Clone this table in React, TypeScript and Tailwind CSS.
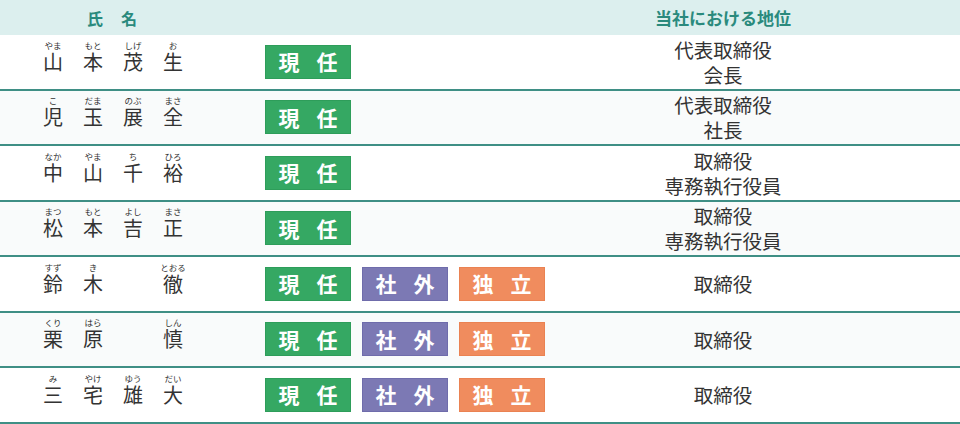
type Slot = { ruby: string; kanji: string } | null;

type Officer = {
  name: Slot[];
  badges: ("current" | "outside" | "independent")[];
  position: string[];
};

const officers: Officer[] = [
  {
    name: [
      { ruby: "やま", kanji: "山" },
      { ruby: "もと", kanji: "本" },
      { ruby: "しげ", kanji: "茂" },
      { ruby: "お", kanji: "生" },
    ],
    badges: ["current"],
    position: ["代表取締役", "会長"],
  },
  {
    name: [
      { ruby: "こ", kanji: "児" },
      { ruby: "だま", kanji: "玉" },
      { ruby: "のぶ", kanji: "展" },
      { ruby: "まさ", kanji: "全" },
    ],
    badges: ["current"],
    position: ["代表取締役", "社長"],
  },
  {
    name: [
      { ruby: "なか", kanji: "中" },
      { ruby: "やま", kanji: "山" },
      { ruby: "ち", kanji: "千" },
      { ruby: "ひろ", kanji: "裕" },
    ],
    badges: ["current"],
    position: ["取締役", "専務執行役員"],
  },
  {
    name: [
      { ruby: "まつ", kanji: "松" },
      { ruby: "もと", kanji: "本" },
      { ruby: "よし", kanji: "吉" },
      { ruby: "まさ", kanji: "正" },
    ],
    badges: ["current"],
    position: ["取締役", "専務執行役員"],
  },
  {
    name: [
      { ruby: "すず", kanji: "鈴" },
      { ruby: "き", kanji: "木" },
      null,
      { ruby: "とおる", kanji: "徹" },
    ],
    badges: ["current", "outside", "independent"],
    position: ["取締役"],
  },
  {
    name: [
      { ruby: "くり", kanji: "栗" },
      { ruby: "はら", kanji: "原" },
      null,
      { ruby: "しん", kanji: "慎" },
    ],
    badges: ["current", "outside", "independent"],
    position: ["取締役"],
  },
  {
    name: [
      { ruby: "み", kanji: "三" },
      { ruby: "やけ", kanji: "宅" },
      { ruby: "ゆう", kanji: "雄" },
      { ruby: "だい", kanji: "大" },
    ],
    badges: ["current", "outside", "independent"],
    position: ["取締役"],
  },
];

const badgeStyles = {
  current: { label: ["現", "任"], cls: "border-[#2e9d5a] bg-[#35a863]" },
  outside: { label: ["社", "外"], cls: "border-[#6f6cab] bg-[#7c79b4]" },
  independent: { label: ["独", "立"], cls: "border-[#ea8252] bg-[#f08c5e]" },
};

function Badge({ kind }: { kind: "current" | "outside" | "independent" }) {
  const b = badgeStyles[kind];
  return (
    <span
      className={`flex h-[34px] w-[86px] shrink-0 items-center justify-center gap-[17px] border text-[21px] font-bold leading-none text-white ${b.cls}`}
    >
      <span>{b.label[0]}</span>
      <span>{b.label[1]}</span>
    </span>
  );
}

function Name({ slots }: { slots: Slot[] }) {
  return (
    <div className="flex pb-[12px] pl-[43px]">
      {slots.map((s, i) => (
        <div key={i} className="w-10">
          {s && (
            <div className="flex w-5 flex-col items-center gap-[2px]">
              <span className="whitespace-nowrap text-[8.5px] leading-[10px] text-[#333]">
                {s.ruby}
              </span>
              <span className="text-[20px] leading-[20px] text-[#333]">
                {s.kanji}
              </span>
            </div>
          )}
        </div>
      ))}
    </div>
  );
}

export default function App() {
  return (
    <div className="w-[960px] h-[424px] overflow-hidden bg-white font-['Noto_Sans_CJK_JP',sans-serif]">
      <div className="flex h-[35px] items-center bg-[#dcefee] text-[#2a8a7d]">
        <div className="w-[265px] pl-[87px] text-[16px] font-bold tracking-[18px]">
          氏名
        </div>
        <div className="w-[308px]" />
        <div className="w-[300px] text-center text-[17px] font-bold">
          当社における地位
        </div>
      </div>
      {officers.map((o, i) => (
        <div
          key={i}
          className={`flex h-[55.5px] items-center border-b-2 border-[#3f8f85] ${
            i % 2 === 1 ? "bg-[#f9fbfb]" : "bg-white"
          }`}
        >
          <div className="w-[265px]">
            <Name slots={o.name} />
          </div>
          <div className="flex w-[308px] gap-[11px]">
            {o.badges.map((b) => (
              <Badge key={b} kind={b} />
            ))}
          </div>
          <div className="w-[300px] text-center text-[19.5px] leading-[25px] text-[#333]">
            {o.position.map((p) => (
              <div key={p}>{p}</div>
            ))}
          </div>
        </div>
      ))}
    </div>
  );
}
